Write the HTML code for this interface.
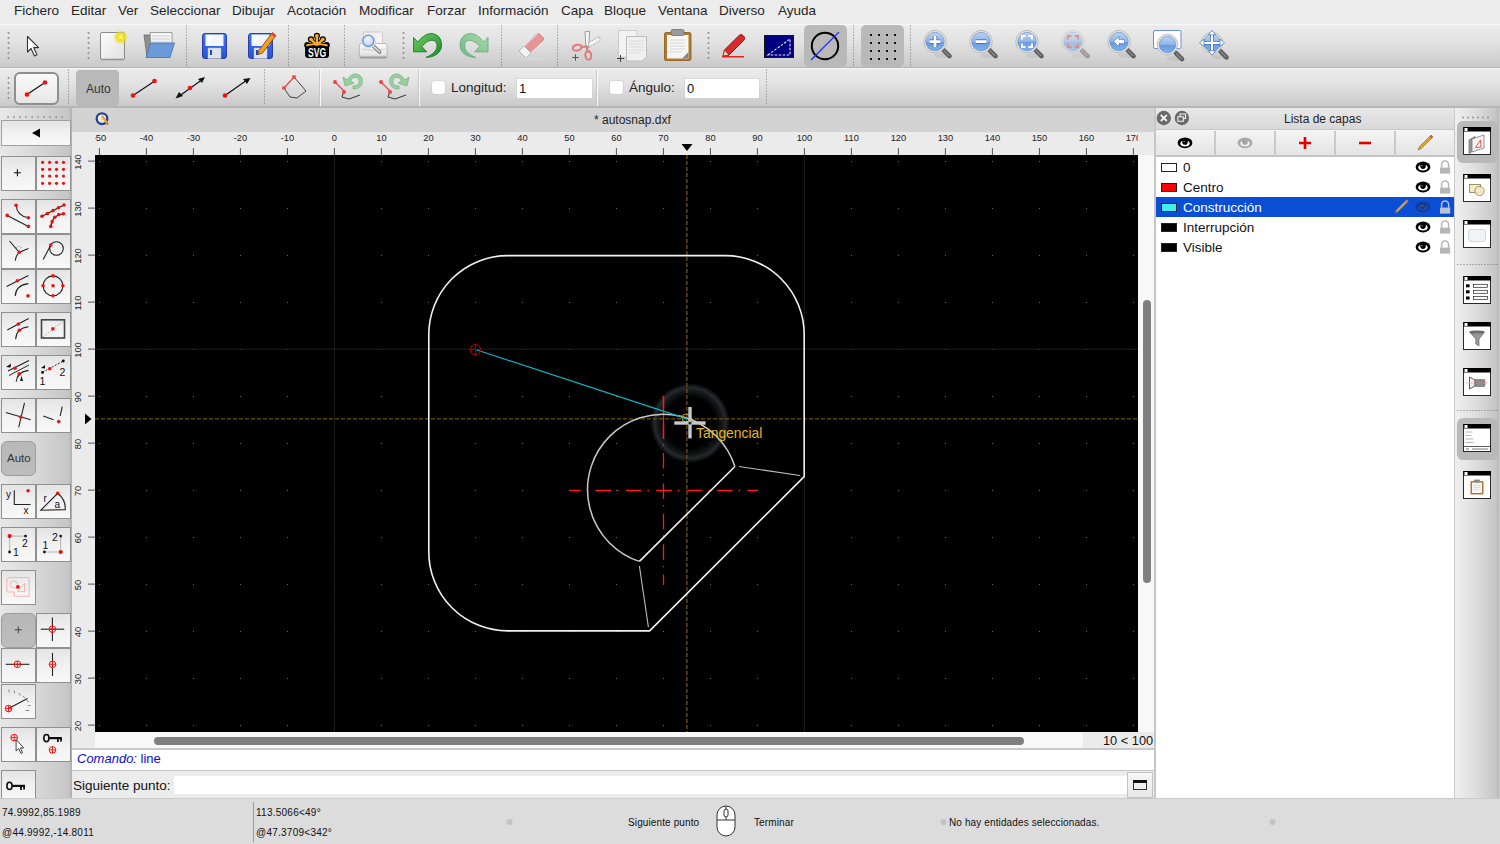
<!DOCTYPE html><html><head><meta charset="utf-8"><style>
*{margin:0;padding:0;box-sizing:border-box}
html,body{width:1500px;height:844px;overflow:hidden;background:#ececec;font-family:"Liberation Sans",sans-serif;color:#222}
body{position:relative}
.a{position:absolute}
.t{position:absolute;white-space:nowrap;line-height:1}
svg{position:absolute;overflow:visible}
#menu span{position:absolute;top:4px;font-size:13.5px;color:#262626;line-height:1}
.tb{position:absolute;left:0;width:1500px;background:linear-gradient(#ececec,#e2e2e2 40%,#cacaca);border-top:1px solid #f7f7f7;border-bottom:1px solid #b3b3b3}
.lb{position:absolute;width:35px;height:34px;border:1px solid #909090;background:linear-gradient(#e4e4e4,#f0f0f0 45%,#f8f8f8)}
.act{position:absolute;background:#b9b9b9;border-radius:5px}
</style></head><body>
<div id="menu" class="a" style="left:0;top:0;width:1500px;height:24px;background:#ececec">
<span style="left:14px">Fichero</span>
<span style="left:71px">Editar</span>
<span style="left:118px">Ver</span>
<span style="left:150px">Seleccionar</span>
<span style="left:232px">Dibujar</span>
<span style="left:287px">Acotación</span>
<span style="left:359px">Modificar</span>
<span style="left:427px">Forzar</span>
<span style="left:478px">Información</span>
<span style="left:561px">Capa</span>
<span style="left:604px">Bloque</span>
<span style="left:658px">Ventana</span>
<span style="left:719px">Diverso</span>
<span style="left:778px">Ayuda</span>
</div>
<div class="tb" style="top:24px;height:44px"></div>
<div class="tb" style="top:68px;height:40px;border-bottom:2px solid #b6b6b6"></div>
<svg style="left:0;top:0" width="1500" height="844"><circle cx="8.5" cy="33" r="1.0" fill="#8c8c8c"/><circle cx="8.5" cy="38" r="1.0" fill="#8c8c8c"/><circle cx="8.5" cy="43" r="1.0" fill="#8c8c8c"/><circle cx="8.5" cy="48" r="1.0" fill="#8c8c8c"/><circle cx="8.5" cy="53" r="1.0" fill="#8c8c8c"/><circle cx="8.5" cy="58" r="1.0" fill="#8c8c8c"/><circle cx="88.5" cy="33" r="1.0" fill="#8c8c8c"/><circle cx="88.5" cy="38" r="1.0" fill="#8c8c8c"/><circle cx="88.5" cy="43" r="1.0" fill="#8c8c8c"/><circle cx="88.5" cy="48" r="1.0" fill="#8c8c8c"/><circle cx="88.5" cy="53" r="1.0" fill="#8c8c8c"/><circle cx="88.5" cy="58" r="1.0" fill="#8c8c8c"/><circle cx="403.5" cy="33" r="1.0" fill="#8c8c8c"/><circle cx="403.5" cy="38" r="1.0" fill="#8c8c8c"/><circle cx="403.5" cy="43" r="1.0" fill="#8c8c8c"/><circle cx="403.5" cy="48" r="1.0" fill="#8c8c8c"/><circle cx="403.5" cy="53" r="1.0" fill="#8c8c8c"/><circle cx="403.5" cy="58" r="1.0" fill="#8c8c8c"/><circle cx="708.5" cy="33" r="1.0" fill="#8c8c8c"/><circle cx="708.5" cy="38" r="1.0" fill="#8c8c8c"/><circle cx="708.5" cy="43" r="1.0" fill="#8c8c8c"/><circle cx="708.5" cy="48" r="1.0" fill="#8c8c8c"/><circle cx="708.5" cy="53" r="1.0" fill="#8c8c8c"/><circle cx="708.5" cy="58" r="1.0" fill="#8c8c8c"/><circle cx="8.5" cy="78" r="1.0" fill="#8c8c8c"/><circle cx="8.5" cy="83" r="1.0" fill="#8c8c8c"/><circle cx="8.5" cy="88" r="1.0" fill="#8c8c8c"/><circle cx="8.5" cy="93" r="1.0" fill="#8c8c8c"/><circle cx="8.5" cy="98" r="1.0" fill="#8c8c8c"/><circle cx="186.5" cy="26" r="0.55" fill="#6a6a6a"/><circle cx="186.5" cy="29" r="0.55" fill="#6a6a6a"/><circle cx="186.5" cy="32" r="0.55" fill="#6a6a6a"/><circle cx="186.5" cy="35" r="0.55" fill="#6a6a6a"/><circle cx="186.5" cy="38" r="0.55" fill="#6a6a6a"/><circle cx="186.5" cy="41" r="0.55" fill="#6a6a6a"/><circle cx="186.5" cy="44" r="0.55" fill="#6a6a6a"/><circle cx="186.5" cy="47" r="0.55" fill="#6a6a6a"/><circle cx="186.5" cy="50" r="0.55" fill="#6a6a6a"/><circle cx="186.5" cy="53" r="0.55" fill="#6a6a6a"/><circle cx="186.5" cy="56" r="0.55" fill="#6a6a6a"/><circle cx="186.5" cy="59" r="0.55" fill="#6a6a6a"/><circle cx="186.5" cy="62" r="0.55" fill="#6a6a6a"/><circle cx="186.5" cy="65" r="0.55" fill="#6a6a6a"/><circle cx="288.5" cy="26" r="0.55" fill="#6a6a6a"/><circle cx="288.5" cy="29" r="0.55" fill="#6a6a6a"/><circle cx="288.5" cy="32" r="0.55" fill="#6a6a6a"/><circle cx="288.5" cy="35" r="0.55" fill="#6a6a6a"/><circle cx="288.5" cy="38" r="0.55" fill="#6a6a6a"/><circle cx="288.5" cy="41" r="0.55" fill="#6a6a6a"/><circle cx="288.5" cy="44" r="0.55" fill="#6a6a6a"/><circle cx="288.5" cy="47" r="0.55" fill="#6a6a6a"/><circle cx="288.5" cy="50" r="0.55" fill="#6a6a6a"/><circle cx="288.5" cy="53" r="0.55" fill="#6a6a6a"/><circle cx="288.5" cy="56" r="0.55" fill="#6a6a6a"/><circle cx="288.5" cy="59" r="0.55" fill="#6a6a6a"/><circle cx="288.5" cy="62" r="0.55" fill="#6a6a6a"/><circle cx="288.5" cy="65" r="0.55" fill="#6a6a6a"/><circle cx="344.5" cy="26" r="0.55" fill="#6a6a6a"/><circle cx="344.5" cy="29" r="0.55" fill="#6a6a6a"/><circle cx="344.5" cy="32" r="0.55" fill="#6a6a6a"/><circle cx="344.5" cy="35" r="0.55" fill="#6a6a6a"/><circle cx="344.5" cy="38" r="0.55" fill="#6a6a6a"/><circle cx="344.5" cy="41" r="0.55" fill="#6a6a6a"/><circle cx="344.5" cy="44" r="0.55" fill="#6a6a6a"/><circle cx="344.5" cy="47" r="0.55" fill="#6a6a6a"/><circle cx="344.5" cy="50" r="0.55" fill="#6a6a6a"/><circle cx="344.5" cy="53" r="0.55" fill="#6a6a6a"/><circle cx="344.5" cy="56" r="0.55" fill="#6a6a6a"/><circle cx="344.5" cy="59" r="0.55" fill="#6a6a6a"/><circle cx="344.5" cy="62" r="0.55" fill="#6a6a6a"/><circle cx="344.5" cy="65" r="0.55" fill="#6a6a6a"/><circle cx="501.5" cy="26" r="0.55" fill="#6a6a6a"/><circle cx="501.5" cy="29" r="0.55" fill="#6a6a6a"/><circle cx="501.5" cy="32" r="0.55" fill="#6a6a6a"/><circle cx="501.5" cy="35" r="0.55" fill="#6a6a6a"/><circle cx="501.5" cy="38" r="0.55" fill="#6a6a6a"/><circle cx="501.5" cy="41" r="0.55" fill="#6a6a6a"/><circle cx="501.5" cy="44" r="0.55" fill="#6a6a6a"/><circle cx="501.5" cy="47" r="0.55" fill="#6a6a6a"/><circle cx="501.5" cy="50" r="0.55" fill="#6a6a6a"/><circle cx="501.5" cy="53" r="0.55" fill="#6a6a6a"/><circle cx="501.5" cy="56" r="0.55" fill="#6a6a6a"/><circle cx="501.5" cy="59" r="0.55" fill="#6a6a6a"/><circle cx="501.5" cy="62" r="0.55" fill="#6a6a6a"/><circle cx="501.5" cy="65" r="0.55" fill="#6a6a6a"/><circle cx="557.5" cy="26" r="0.55" fill="#6a6a6a"/><circle cx="557.5" cy="29" r="0.55" fill="#6a6a6a"/><circle cx="557.5" cy="32" r="0.55" fill="#6a6a6a"/><circle cx="557.5" cy="35" r="0.55" fill="#6a6a6a"/><circle cx="557.5" cy="38" r="0.55" fill="#6a6a6a"/><circle cx="557.5" cy="41" r="0.55" fill="#6a6a6a"/><circle cx="557.5" cy="44" r="0.55" fill="#6a6a6a"/><circle cx="557.5" cy="47" r="0.55" fill="#6a6a6a"/><circle cx="557.5" cy="50" r="0.55" fill="#6a6a6a"/><circle cx="557.5" cy="53" r="0.55" fill="#6a6a6a"/><circle cx="557.5" cy="56" r="0.55" fill="#6a6a6a"/><circle cx="557.5" cy="59" r="0.55" fill="#6a6a6a"/><circle cx="557.5" cy="62" r="0.55" fill="#6a6a6a"/><circle cx="557.5" cy="65" r="0.55" fill="#6a6a6a"/><circle cx="853.5" cy="26" r="0.55" fill="#6a6a6a"/><circle cx="853.5" cy="29" r="0.55" fill="#6a6a6a"/><circle cx="853.5" cy="32" r="0.55" fill="#6a6a6a"/><circle cx="853.5" cy="35" r="0.55" fill="#6a6a6a"/><circle cx="853.5" cy="38" r="0.55" fill="#6a6a6a"/><circle cx="853.5" cy="41" r="0.55" fill="#6a6a6a"/><circle cx="853.5" cy="44" r="0.55" fill="#6a6a6a"/><circle cx="853.5" cy="47" r="0.55" fill="#6a6a6a"/><circle cx="853.5" cy="50" r="0.55" fill="#6a6a6a"/><circle cx="853.5" cy="53" r="0.55" fill="#6a6a6a"/><circle cx="853.5" cy="56" r="0.55" fill="#6a6a6a"/><circle cx="853.5" cy="59" r="0.55" fill="#6a6a6a"/><circle cx="853.5" cy="62" r="0.55" fill="#6a6a6a"/><circle cx="853.5" cy="65" r="0.55" fill="#6a6a6a"/><circle cx="910.5" cy="26" r="0.55" fill="#6a6a6a"/><circle cx="910.5" cy="29" r="0.55" fill="#6a6a6a"/><circle cx="910.5" cy="32" r="0.55" fill="#6a6a6a"/><circle cx="910.5" cy="35" r="0.55" fill="#6a6a6a"/><circle cx="910.5" cy="38" r="0.55" fill="#6a6a6a"/><circle cx="910.5" cy="41" r="0.55" fill="#6a6a6a"/><circle cx="910.5" cy="44" r="0.55" fill="#6a6a6a"/><circle cx="910.5" cy="47" r="0.55" fill="#6a6a6a"/><circle cx="910.5" cy="50" r="0.55" fill="#6a6a6a"/><circle cx="910.5" cy="53" r="0.55" fill="#6a6a6a"/><circle cx="910.5" cy="56" r="0.55" fill="#6a6a6a"/><circle cx="910.5" cy="59" r="0.55" fill="#6a6a6a"/><circle cx="910.5" cy="62" r="0.55" fill="#6a6a6a"/><circle cx="910.5" cy="65" r="0.55" fill="#6a6a6a"/><circle cx="68.5" cy="70" r="0.55" fill="#6a6a6a"/><circle cx="68.5" cy="73" r="0.55" fill="#6a6a6a"/><circle cx="68.5" cy="76" r="0.55" fill="#6a6a6a"/><circle cx="68.5" cy="79" r="0.55" fill="#6a6a6a"/><circle cx="68.5" cy="82" r="0.55" fill="#6a6a6a"/><circle cx="68.5" cy="85" r="0.55" fill="#6a6a6a"/><circle cx="68.5" cy="88" r="0.55" fill="#6a6a6a"/><circle cx="68.5" cy="91" r="0.55" fill="#6a6a6a"/><circle cx="68.5" cy="94" r="0.55" fill="#6a6a6a"/><circle cx="68.5" cy="97" r="0.55" fill="#6a6a6a"/><circle cx="68.5" cy="100" r="0.55" fill="#6a6a6a"/><circle cx="68.5" cy="103" r="0.55" fill="#6a6a6a"/><circle cx="264.5" cy="70" r="0.55" fill="#6a6a6a"/><circle cx="264.5" cy="73" r="0.55" fill="#6a6a6a"/><circle cx="264.5" cy="76" r="0.55" fill="#6a6a6a"/><circle cx="264.5" cy="79" r="0.55" fill="#6a6a6a"/><circle cx="264.5" cy="82" r="0.55" fill="#6a6a6a"/><circle cx="264.5" cy="85" r="0.55" fill="#6a6a6a"/><circle cx="264.5" cy="88" r="0.55" fill="#6a6a6a"/><circle cx="264.5" cy="91" r="0.55" fill="#6a6a6a"/><circle cx="264.5" cy="94" r="0.55" fill="#6a6a6a"/><circle cx="264.5" cy="97" r="0.55" fill="#6a6a6a"/><circle cx="264.5" cy="100" r="0.55" fill="#6a6a6a"/><circle cx="264.5" cy="103" r="0.55" fill="#6a6a6a"/><circle cx="766.5" cy="70" r="0.55" fill="#6a6a6a"/><circle cx="766.5" cy="73" r="0.55" fill="#6a6a6a"/><circle cx="766.5" cy="76" r="0.55" fill="#6a6a6a"/><circle cx="766.5" cy="79" r="0.55" fill="#6a6a6a"/><circle cx="766.5" cy="82" r="0.55" fill="#6a6a6a"/><circle cx="766.5" cy="85" r="0.55" fill="#6a6a6a"/><circle cx="766.5" cy="88" r="0.55" fill="#6a6a6a"/><circle cx="766.5" cy="91" r="0.55" fill="#6a6a6a"/><circle cx="766.5" cy="94" r="0.55" fill="#6a6a6a"/><circle cx="766.5" cy="97" r="0.55" fill="#6a6a6a"/><circle cx="766.5" cy="100" r="0.55" fill="#6a6a6a"/><circle cx="766.5" cy="103" r="0.55" fill="#6a6a6a"/><rect x="320" y="70" width="1" height="36" fill="#fafafa"/><rect x="319" y="70" width="1" height="36" fill="#c6c6c6"/><rect x="419" y="70" width="1" height="36" fill="#fafafa"/><rect x="418" y="70" width="1" height="36" fill="#c6c6c6"/><rect x="597" y="70" width="1" height="36" fill="#fafafa"/><rect x="596" y="70" width="1" height="36" fill="#c6c6c6"/></svg>
<div class="act" style="left:804px;top:25px;width:43px;height:42px"></div>
<div class="act" style="left:861px;top:25px;width:43px;height:42px"></div>
<div class="act" style="left:76px;top:70px;width:43px;height:36px;border-radius:4px"></div>
<div class="t" style="left:86px;top:83px;font-size:12px;color:#333">Auto</div>
<div class="a" style="left:14px;top:72px;width:45px;height:33px;border:2px solid #8e8e8e;border-radius:6px;background:linear-gradient(#fafafa,#e6e6e6)"></div>
<div class="a" style="left:432px;top:81px;width:13px;height:13px;background:#fff;border-radius:3px;box-shadow:0 0 0 0.5px #c8c8c8"></div>
<div class="t" style="left:451px;top:81px;font-size:13.5px;color:#222">Longitud:</div>
<div class="a" style="left:517px;top:79px;width:75px;height:19px;background:#fff;box-shadow:0 0 0 0.5px #cfcfcf"></div>
<div class="t" style="left:519px;top:82px;font-size:13px;color:#111">1</div>
<div class="a" style="left:610px;top:81px;width:13px;height:13px;background:#fff;border-radius:3px;box-shadow:0 0 0 0.5px #c8c8c8"></div>
<div class="t" style="left:629px;top:81px;font-size:13.5px;color:#222">Ángulo:</div>
<div class="a" style="left:685px;top:79px;width:74px;height:19px;background:#fff;box-shadow:0 0 0 0.5px #cfcfcf"></div>
<div class="t" style="left:687px;top:82px;font-size:13px;color:#111">0</div>
<svg style="left:0;top:0" width="1500" height="110" font-family="Liberation Sans"><defs>
<linearGradient id="gPage" x1="0" y1="0" x2="1" y2="1"><stop offset="0" stop-color="#fdfdfd"/><stop offset="1" stop-color="#e0e0e0"/></linearGradient>
<radialGradient id="gYel"><stop offset="0" stop-color="#ffffc8"/><stop offset="0.3" stop-color="#f4e81c"/><stop offset="0.6" stop-color="#ecdc20" stop-opacity="0.8"/><stop offset="1" stop-color="#f0e020" stop-opacity="0"/></radialGradient>
<linearGradient id="gBlue" x1="0" y1="0" x2="0" y2="1"><stop offset="0" stop-color="#3f78f0"/><stop offset="1" stop-color="#2453d8"/></linearGradient>
<radialGradient id="gLens" cx="0.45" cy="0.4" r="0.6"><stop offset="0" stop-color="#d8e8fa"/><stop offset="0.5" stop-color="#8ab4ea"/><stop offset="1" stop-color="#4a7fd0"/></radialGradient>
<linearGradient id="gGreen" x1="0" y1="0" x2="1" y2="1"><stop offset="0" stop-color="#6ccc5c"/><stop offset="1" stop-color="#1e8a2e"/></linearGradient>
<linearGradient id="gGreenL" x1="0" y1="0" x2="1" y2="1"><stop offset="0" stop-color="#a8dca8"/><stop offset="1" stop-color="#6cb884"/></linearGradient>
</defs><path d="M27.5 36.5 L27.5 52 L31 48.5 L34.5 56 L37 54.8 L33.6 47.6 L38.6 47.6 Z" fill="#fff" stroke="#333" stroke-width="1.1" stroke-linejoin="round"/><rect x="100.5" y="32.5" width="24" height="27" rx="1.5" fill="url(#gPage)" stroke="#8a8a8a" stroke-width="1"/><rect x="101" y="58.5" width="23" height="2" fill="#9a9a9a" opacity="0.6"/><circle cx="120.7" cy="37.3" r="7.5" fill="url(#gYel)"/><path d="M144 35 L152 35 L154 37 L165 37 L165 56 L147 57 Z" fill="#8e8e8e" stroke="#6a6a6a" stroke-width="0.8"/><path d="M150 32.5 L172 32.5 L172 47 L151 47 Z" fill="#f4f4f4" stroke="#8a8a8a" stroke-width="0.8"/><path d="M152 36h18M152 39h18M152 42h18" stroke="#c8c8c8" stroke-width="0.8"/><path d="M150.5 43 L174.5 43 L170 57.5 L146 57.5 Z" fill="#6b9ad8" stroke="#4a78b8" stroke-width="0.9"/><rect x="202.5" y="33.5" width="24" height="25" rx="2.5" fill="url(#gBlue)" stroke="#2a3ea0" stroke-width="1"/><rect x="205.5" y="34.5" width="18" height="11.5" fill="#f2f6fc"/><path d="M207 35.5 L214 35.5 L208 44 Z" fill="#fff" opacity="0.8"/><rect x="208" y="48" width="13" height="10.5" fill="#dfe3ea" stroke="#b8bcc8" stroke-width="0.5"/><rect x="210" y="50" width="2" height="5" fill="#1a46c8"/><rect x="248.5" y="33.5" width="24" height="25" rx="2.5" fill="url(#gBlue)" stroke="#2a3ea0" stroke-width="1"/><rect x="251.5" y="34.5" width="18" height="11.5" fill="#f2f6fc"/><path d="M253 35.5 L260 35.5 L254 44 Z" fill="#fff" opacity="0.8"/><rect x="254" y="48" width="13" height="10.5" fill="#dfe3ea" stroke="#b8bcc8" stroke-width="0.5"/><rect x="256" y="50" width="2" height="5" fill="#1a46c8"/><path d="M259 50 L272.5 32.5 L276 35.5 L262.5 53 L258 54.5 Z" fill="#f0a020" stroke="#8a4a10" stroke-width="0.9" stroke-linejoin="round"/><path d="M271 34.5 L272.5 32.5 L276 35.5 L274.5 37.5Z" fill="#e04848"/><rect x="305.1" y="42.9" width="23.9" height="15" rx="3" fill="#000"/><circle cx="307.3" cy="45.2" r="3.1" fill="#000"/><circle cx="311" cy="39.3" r="3.1" fill="#000"/><circle cx="316.9" cy="35.8" r="3.1" fill="#000"/><circle cx="322.8" cy="39.3" r="3.1" fill="#000"/><circle cx="326.7" cy="45.2" r="3.1" fill="#000"/><path d="M316.9 45.3 L311 39.3M316.9 45.3 L316.9 35.8M316.9 45.3 L322.8 39.3" stroke="#000" stroke-width="4"/><circle cx="311" cy="39.3" r="1.9" fill="#f7a928"/><circle cx="316.9" cy="35.8" r="1.9" fill="#f7a928"/><circle cx="322.8" cy="39.3" r="1.9" fill="#f7a928"/><path d="M316.9 45.3 L311 39.3M316.9 45.3 L316.9 35.8M316.9 45.3 L322.8 39.3" stroke="#f7a928" stroke-width="2.4"/><path d="M307 45.3 Q317 43 326.9 45.3" stroke="#f7a928" stroke-width="1.9" fill="none" stroke-linecap="round"/><text transform="translate(317,57.2) scale(0.64,1)" text-anchor="middle" font-size="13.5" font-weight="bold" fill="#fff">SVG</text><defs><linearGradient id="gPrn" x1="0" y1="0" x2="0" y2="1"><stop offset="0" stop-color="#fafafa"/><stop offset="0.7" stop-color="#e8e8e8"/><stop offset="1" stop-color="#c8c8c8"/></linearGradient><radialGradient id="gLensL" cx="0.45" cy="0.35" r="0.7"><stop offset="0" stop-color="#f0f6fc"/><stop offset="1" stop-color="#b4cae6"/></radialGradient></defs><rect x="363.5" y="32" width="19" height="13.5" rx="1" fill="#f2f2f2" stroke="#c4c4c4" stroke-width="0.8"/><path d="M385 43.5 Q387.2 43.5 387.2 46 L387.2 55.5 Q387.2 58 384.5 58 L362 58 Q359.3 58 359.3 55.5 L359.3 46 Q359.3 43.5 361.5 43.5 Z" fill="url(#gPrn)" stroke="#a8a8a8" stroke-width="0.8"/><path d="M361.5 49 Q374 52 385 49" fill="none" stroke="#c8c8c8" stroke-width="0.8"/><rect x="360" y="56.5" width="26.5" height="1.8" fill="#8a8a8a" opacity="0.7"/><path d="M372.5 45 L379.5 52" stroke="#7a7a7a" stroke-width="3.6" stroke-linecap="round"/><path d="M372.8 45.3 L379.2 51.7" stroke="#d8d8d8" stroke-width="1.8" stroke-linecap="round"/><circle cx="368.3" cy="40.9" r="7" fill="#fbfbfb" stroke="#c8c8c8" stroke-width="0.6"/><circle cx="368.3" cy="40.9" r="5.6" fill="url(#gLensL)" stroke="#4a86d0" stroke-width="1.1"/><path d="M413.6 37.4 L417.7 42.1 C421 38 426 33.6 431 33.6 C438 33.6 442 39 441.5 46 C441 53 434 57.5 426.2 57.3 C432 55 437 51 437 46 C437 42 434.5 40.3 432 40.3 C428 40.3 424.5 43.5 421.8 46.5 L426.8 51.8 L413.6 51.8 Z" fill="url(#gGreen)" stroke="#1a7a2a" stroke-width="0.9" stroke-linejoin="round"/><path d="M413.6 37.4 L417.7 42.1 C421 38 426 33.6 431 33.6 C438 33.6 442 39 441.5 46 C441 53 434 57.5 426.2 57.3 C432 55 437 51 437 46 C437 42 434.5 40.3 432 40.3 C428 40.3 424.5 43.5 421.8 46.5 L426.8 51.8 L413.6 51.8 Z" fill="url(#gGreenL)" stroke="#6aa880" stroke-width="0.9" stroke-linejoin="round" transform="translate(901.6,0) scale(-1,1)"/><path d="M519 51 L536 34 Q538 32.5 540 34.5 L543 37.5 Q544.5 39.5 543 41 L526 58 Z" fill="#e8868a" stroke="#c05a60" stroke-width="0.8" opacity="0.85"/><path d="M519 51 L524 46 L531 53 L526 58 Z" fill="#f4f4f4" stroke="#b0b0b0" stroke-width="0.8"/><path d="M524 46 L538 33 M531 53 L545 40" stroke="#f6f6f6" stroke-width="1.2" opacity="0.7"/><ellipse cx="533" cy="58.5" rx="11" ry="1.3" fill="#d8d8d8"/><path d="M585 31.8 L589.6 31.2 L588.8 47.5 L585.8 45.5 Z" fill="#f4f4f4" stroke="#8a8a8a" stroke-width="0.8" stroke-linejoin="round"/><path d="M588.6 42.5 L599.4 36.6 L600.2 40.4 L588.8 47.5 Z" fill="#f4f4f4" stroke="#8a8a8a" stroke-width="0.8" stroke-dasharray="1.2 0.8" stroke-linejoin="round"/><path d="M581.2 47 L586.5 46.3 M586.8 47 L587.6 51.5" stroke="#e07c80" stroke-width="2.2" stroke-linecap="round"/><ellipse cx="577.1" cy="47.7" rx="4.4" ry="2.9" fill="none" stroke="#e07c80" stroke-width="2.1" transform="rotate(-12 577.1 47.7)"/><ellipse cx="588.3" cy="55.4" rx="2.9" ry="4.3" fill="none" stroke="#e07c80" stroke-width="2.1" transform="rotate(-6 588.3 55.4)"/><path d="M572.3 57.5h6.4M575.5 54.3v6.4" stroke="#555" stroke-width="1"/><path d="M618.5 30.5 L637 30.5 L637 57 L618.5 57 Z" fill="#f2f2f2" stroke="#c4c4c4" stroke-width="0.8"/><path d="M626.5 36.5 L646.5 36.5 L646.5 57 L642 61 L626.5 61 Z" fill="#f0f0f0" stroke="#b8b8b8" stroke-width="0.9"/><path d="M629 41h15M629 44h15M629 47h15M629 50h15M629 53h12" stroke="#d4d4d4" stroke-width="0.8"/><path d="M617 58.5h7M620.5 55v7" stroke="#444" stroke-width="1"/><rect x="664.5" y="32.5" width="26.5" height="28" rx="1.5" fill="#b47a2c" stroke="#8a5a1a" stroke-width="0.8"/><path d="M667 35 L688.5 35 L688.5 58.5 L667 58.5Z" fill="#f6f6f6"/><path d="M682 58.5 L688.5 52 L688.5 58.5Z" fill="#888"/><path d="M670 40h15M670 43h15M670 46h15M670 49h15M670 52h12" stroke="#cfcfcf" stroke-width="0.8"/><rect x="671" y="29.5" width="13" height="6" rx="1.5" fill="#9a9a9a" stroke="#707070" stroke-width="0.8"/><path d="M723 56 L724.5 50 L739 35.5 Q741 33.5 743 35.5 L744 36.5 Q745.5 38.5 743.5 40.5 L729 55 Z" fill="#d92b2b" stroke="#7a1010" stroke-width="0.9" stroke-linejoin="round"/><path d="M723 56 L724.5 50 L729 55Z" fill="#f4d4a0" stroke="#7a1010" stroke-width="0.6"/><rect x="722" y="56" width="22" height="1.5" fill="#e82020"/><rect x="764.5" y="35.5" width="29" height="22" fill="#000080" stroke="#181818" stroke-width="1"/><path d="M768 55 L790 39 L790 55 Z" fill="none" stroke="#e8e8f8" stroke-width="1.1" stroke-dasharray="2.5 1.5"/><circle cx="825" cy="46" r="13.2" fill="none" stroke="#000" stroke-width="2"/><line x1="811" y1="60" x2="839" y2="32" stroke="#1a2ef0" stroke-width="1.1"/><rect x="870" y="34" width="2" height="2" fill="#111"/><rect x="870" y="42" width="2" height="2" fill="#111"/><rect x="870" y="50" width="2" height="2" fill="#111"/><rect x="870" y="58" width="2" height="2" fill="#111"/><rect x="878" y="34" width="2" height="2" fill="#111"/><rect x="878" y="42" width="2" height="2" fill="#111"/><rect x="878" y="50" width="2" height="2" fill="#111"/><rect x="878" y="58" width="2" height="2" fill="#111"/><rect x="886" y="34" width="2" height="2" fill="#111"/><rect x="886" y="42" width="2" height="2" fill="#111"/><rect x="886" y="50" width="2" height="2" fill="#111"/><rect x="886" y="58" width="2" height="2" fill="#111"/><rect x="894" y="34" width="2" height="2" fill="#111"/><rect x="894" y="42" width="2" height="2" fill="#111"/><rect x="894" y="50" width="2" height="2" fill="#111"/><rect x="894" y="58" width="2" height="2" fill="#111"/><defs><linearGradient id="gLens2" x1="0" y1="0" x2="0" y2="1"><stop offset="0" stop-color="#bcd2f0"/><stop offset="0.5" stop-color="#8fb4e6"/><stop offset="0.52" stop-color="#6a9ade"/><stop offset="1" stop-color="#7cb2ee"/></linearGradient></defs><g><ellipse cx="943" cy="55.6" rx="9" ry="2.5" fill="#000" opacity="0.06"/><path d="M943.5 50.1 L949.5 56.1" stroke="#5e5e5e" stroke-width="4.6" stroke-linecap="round"/><path d="M944 50.6 L949 55.6" stroke="#8a8a8a" stroke-width="1.4" stroke-linecap="round" stroke-dasharray="1 1"/><circle cx="935" cy="41.6" r="11.2" fill="#ecebe4" stroke="#b4b2aa" stroke-width="0.9"/><circle cx="935" cy="41.6" r="9.299999999999999" fill="url(#gLens2)" stroke="#5a86c8" stroke-width="0.6"/><path d="M929.5 41.6h11M935 36.1v11" stroke="#3a6ab8" stroke-width="4.4"/><path d="M929.5 41.6h11M935 36.1v11" stroke="#fff" stroke-width="2.8"/></g><g><ellipse cx="989" cy="55.6" rx="9" ry="2.5" fill="#000" opacity="0.06"/><path d="M989.5 50.1 L995.5 56.1" stroke="#5e5e5e" stroke-width="4.6" stroke-linecap="round"/><path d="M990 50.6 L995 55.6" stroke="#8a8a8a" stroke-width="1.4" stroke-linecap="round" stroke-dasharray="1 1"/><circle cx="981" cy="41.6" r="11.2" fill="#ecebe4" stroke="#b4b2aa" stroke-width="0.9"/><circle cx="981" cy="41.6" r="9.299999999999999" fill="url(#gLens2)" stroke="#5a86c8" stroke-width="0.6"/><path d="M975.5 41.6h11" stroke="#3a6ab8" stroke-width="4.4"/><path d="M975.5 41.6h11" stroke="#fff" stroke-width="2.8"/></g><g><ellipse cx="1035" cy="55.6" rx="9" ry="2.5" fill="#000" opacity="0.06"/><path d="M1035.5 50.1 L1041.5 56.1" stroke="#5e5e5e" stroke-width="4.6" stroke-linecap="round"/><path d="M1036 50.6 L1041 55.6" stroke="#8a8a8a" stroke-width="1.4" stroke-linecap="round" stroke-dasharray="1 1"/><circle cx="1027" cy="41.6" r="11.2" fill="#ecebe4" stroke="#b4b2aa" stroke-width="0.9"/><circle cx="1027" cy="41.6" r="9.299999999999999" fill="url(#gLens2)" stroke="#5a86c8" stroke-width="0.6"/><path d="M1022 39.6v-3.5h3.5M1028.5 36.1h3.5v3.5M1032 43.6v3.5h-3.5M1025.5 47.1h-3.5v-3.5" fill="none" stroke="#fff" stroke-width="2"/></g><g opacity="0.5"><ellipse cx="1081" cy="55.6" rx="9" ry="2.5" fill="#000" opacity="0.06"/><path d="M1081.5 50.1 L1087.5 56.1" stroke="#5e5e5e" stroke-width="4.6" stroke-linecap="round"/><path d="M1082 50.6 L1087 55.6" stroke="#8a8a8a" stroke-width="1.4" stroke-linecap="round" stroke-dasharray="1 1"/><circle cx="1073" cy="41.6" r="11.2" fill="#ecebe4" stroke="#b4b2aa" stroke-width="0.9"/><circle cx="1073" cy="41.6" r="9.299999999999999" fill="url(#gLens2)" stroke="#5a86c8" stroke-width="0.6"/><path d="M1068 39.6v-3.5h3.5M1074.5 36.1h3.5v3.5M1078 43.6v3.5h-3.5M1071.5 47.1h-3.5v-3.5" fill="none" stroke="#e04040" stroke-width="2"/></g><g><ellipse cx="1127" cy="55.6" rx="9" ry="2.5" fill="#000" opacity="0.06"/><path d="M1127.5 50.1 L1133.5 56.1" stroke="#5e5e5e" stroke-width="4.6" stroke-linecap="round"/><path d="M1128 50.6 L1133 55.6" stroke="#8a8a8a" stroke-width="1.4" stroke-linecap="round" stroke-dasharray="1 1"/><circle cx="1119" cy="41.6" r="11.2" fill="#ecebe4" stroke="#b4b2aa" stroke-width="0.9"/><circle cx="1119" cy="41.6" r="9.299999999999999" fill="url(#gLens2)" stroke="#5a86c8" stroke-width="0.6"/><path d="M1113.5 41.6 L1119 36.5 L1119 39.6 L1124.5 39.6 L1124.5 43.6 L1119 43.6 L1119 46.7Z" fill="#fff" stroke="#3a6ab8" stroke-width="0.6"/></g><rect x="1153.5" y="30.5" width="27.5" height="18" rx="1.5" fill="#fff" stroke="#6a90d0" stroke-width="1"/><g><ellipse cx="1175.5" cy="58.6" rx="9" ry="2.5" fill="#000" opacity="0.06"/><path d="M1176.0 53.1 L1182.0 59.1" stroke="#5e5e5e" stroke-width="4.6" stroke-linecap="round"/><path d="M1176.5 53.6 L1181.5 58.6" stroke="#8a8a8a" stroke-width="1.4" stroke-linecap="round" stroke-dasharray="1 1"/><circle cx="1167.5" cy="44.6" r="10.2" fill="#ecebe4" stroke="#b4b2aa" stroke-width="0.9"/><circle cx="1167.5" cy="44.6" r="8.299999999999999" fill="url(#gLens2)" stroke="#5a86c8" stroke-width="0.6"/></g><g><ellipse cx="1220" cy="56.8" rx="9" ry="2.5" fill="#000" opacity="0.06"/><path d="M1220.5 51.3 L1226.5 57.3" stroke="#5e5e5e" stroke-width="4.6" stroke-linecap="round"/><path d="M1221 51.8 L1226 56.8" stroke="#8a8a8a" stroke-width="1.4" stroke-linecap="round" stroke-dasharray="1 1"/><circle cx="1212" cy="42.8" r="10.5" fill="#ecebe4" stroke="#b4b2aa" stroke-width="0.9"/><circle cx="1212" cy="42.8" r="8.6" fill="url(#gLens2)" stroke="#5a86c8" stroke-width="0.6"/><path d="M1212 33v19.6M1202.2 42.8h19.6" stroke="#3a6ab8" stroke-width="3.6"/><path d="M1212 33v19.6M1202.2 42.8h19.6" stroke="#fff" stroke-width="2.2"/><path d="M1212 30.3l-3.6 4.5h7.2zM1212 55.3l-3.6-4.5h7.2zM1199.5 42.8l4.5-3.6v7.2zM1224.5 42.8l-4.5-3.6v7.2z" fill="#fff" stroke="#3a6ab8" stroke-width="0.7"/></g><line x1="27" y1="94.5" x2="45" y2="82.5" stroke="#111" stroke-width="1.2"/><circle cx="27" cy="94.5" r="2.3" fill="#f01010"/><circle cx="45" cy="82.5" r="2.3" fill="#f01010"/><line x1="133" y1="95.5" x2="154" y2="81.5" stroke="#111" stroke-width="1.2"/><circle cx="133" cy="95.5" r="2.3" fill="#f01010"/><circle cx="154.5" cy="81" r="2.3" fill="#f01010"/><line x1="178" y1="97" x2="203" y2="79" stroke="#111" stroke-width="1.2"/><path d="M175.5 98.5 L179 92 L183 96Z M205 77 L198 79 L202 83Z" fill="#111"/><circle cx="190" cy="88" r="2.3" fill="#f01010"/><line x1="225" y1="95.5" x2="247" y2="80" stroke="#111" stroke-width="1.2"/><path d="M250.5 78 L243 79 L247 84Z" fill="#111"/><circle cx="225" cy="95.5" r="2.3" fill="#f01010"/><path d="M284 88 L294 77 L306 91 L297 98 L290 97 Z" fill="none" stroke="#444" stroke-width="1"/><line x1="284" y1="88" x2="294" y2="77" stroke="#f05050" stroke-width="1.2"/><circle cx="284" cy="88" r="2.1" fill="#f05050"/><circle cx="294" cy="77" r="2.1" fill="#f05050"/><g transform="translate(335,0)"><path d="M0 82 L9 91 L7 97 L14 99 L25 95" fill="none" stroke="#333" stroke-width="1"/><line x1="0" y1="82" x2="9" y2="91" stroke="#f04040" stroke-width="1.2"/><circle cx="0" cy="82" r="2" fill="#f04040"/><circle cx="9" cy="92" r="2" fill="#f04040"/><path d="M12 80 Q16 73 22 74 Q29 76 27 84 Q25 89 18 89 L18 86 Q23 86 24 83 Q25 78 21 77.5 Q17 77 15.5 81 L19 83 L10 86 L8 77 L11 79Z" fill="#98d0a0" stroke="#70a878" stroke-width="0.6"/></g><g transform="translate(381,0)"><path d="M0 82 L9 91 L7 97 L14 99 L25 95" fill="none" stroke="#333" stroke-width="1"/><line x1="0" y1="82" x2="9" y2="91" stroke="#f04040" stroke-width="1.2"/><circle cx="0" cy="82" r="2" fill="#f04040"/><circle cx="9" cy="92" r="2" fill="#f04040"/><path d="M24 80 Q20 73 14 74 Q7 76 9 84 Q11 89 18 89 L18 86 Q13 86 12 83 Q11 78 15 77.5 Q19 77 20.5 81 L17 83 L26 86 L28 77 L25 79Z" fill="#98d0a0" stroke="#70a878" stroke-width="0.6"/></g></svg>
<div class="a" style="left:0;top:108px;width:71px;height:690px;background:linear-gradient(90deg,#e8e8e8,#d6d6d6 55%,#c6c6c6 96%,#b8b8b8)"></div>
<div class="a" style="left:71px;top:108px;width:1px;height:690px;background:#b0b0b0"></div>
<svg style="left:0;top:0" width="80" height="130"><rect x="7.3" y="116.3" width="1.6" height="1.6" fill="#8e8e8e"/><rect x="13.3" y="116.3" width="1.6" height="1.6" fill="#8e8e8e"/><rect x="19.3" y="116.3" width="1.6" height="1.6" fill="#8e8e8e"/><rect x="25.3" y="116.3" width="1.6" height="1.6" fill="#8e8e8e"/><rect x="31.3" y="116.3" width="1.6" height="1.6" fill="#8e8e8e"/><rect x="37.3" y="116.3" width="1.6" height="1.6" fill="#8e8e8e"/><rect x="43.3" y="116.3" width="1.6" height="1.6" fill="#8e8e8e"/><rect x="49.3" y="116.3" width="1.6" height="1.6" fill="#8e8e8e"/><rect x="55.3" y="116.3" width="1.6" height="1.6" fill="#8e8e8e"/><rect x="61.3" y="116.3" width="1.6" height="1.6" fill="#8e8e8e"/></svg>
<div class="a" style="left:1px;top:120px;width:70px;height:26px;border:1px solid #a0a0a0;background:linear-gradient(#e4e4e4,#f0f0f0 45%,#f8f8f8)"></div>
<svg style="left:0;top:0" width="80" height="150"><path d="M32 133 L40 128.5 L40 137.5Z" fill="#000"/></svg>
<div class="lb" style="left:1px;top:156px;width:35px;height:35px"></div>
<div class="lb" style="left:36px;top:156px;width:35px;height:35px"></div>
<div class="lb" style="left:1px;top:199px;width:35px;height:35px"></div>
<div class="lb" style="left:36px;top:199px;width:35px;height:35px"></div>
<div class="lb" style="left:1px;top:234px;width:35px;height:35px"></div>
<div class="lb" style="left:36px;top:234px;width:35px;height:35px"></div>
<div class="lb" style="left:1px;top:269px;width:35px;height:35px"></div>
<div class="lb" style="left:36px;top:269px;width:35px;height:35px"></div>
<div class="lb" style="left:1px;top:312px;width:35px;height:35px"></div>
<div class="lb" style="left:36px;top:312px;width:35px;height:35px"></div>
<div class="lb" style="left:1px;top:355px;width:35px;height:35px"></div>
<div class="lb" style="left:36px;top:355px;width:35px;height:35px"></div>
<div class="lb" style="left:1px;top:398px;width:35px;height:35px"></div>
<div class="lb" style="left:36px;top:398px;width:35px;height:35px"></div>
<div class="a" style="left:1px;top:441px;width:35px;height:35px;background:linear-gradient(#b8b8b8,#bdbdbd);border:1px solid #9c9c9c;border-radius:6px"></div>
<div class="lb" style="left:1px;top:484px;width:35px;height:35px"></div>
<div class="lb" style="left:36px;top:484px;width:35px;height:35px"></div>
<div class="lb" style="left:1px;top:527px;width:35px;height:35px"></div>
<div class="lb" style="left:36px;top:527px;width:35px;height:35px"></div>
<div class="lb" style="left:1px;top:570px;width:35px;height:35px"></div>
<div class="a" style="left:1px;top:613px;width:35px;height:35px;background:linear-gradient(#b8b8b8,#bdbdbd);border:1px solid #9c9c9c;border-radius:6px"></div>
<div class="lb" style="left:36px;top:613px;width:35px;height:35px"></div>
<div class="lb" style="left:1px;top:648px;width:35px;height:35px"></div>
<div class="lb" style="left:36px;top:648px;width:35px;height:35px"></div>
<div class="lb" style="left:1px;top:684px;width:35px;height:35px"></div>
<div class="lb" style="left:1px;top:727px;width:35px;height:35px"></div>
<div class="lb" style="left:36px;top:727px;width:35px;height:35px"></div>
<div class="lb" style="left:1px;top:770px;width:35px;height:30px"></div>
<div class="t" style="left:7px;top:453px;font-size:11.5px;color:#333">Auto</div>
<svg style="left:0;top:0" width="72" height="800" font-family="Liberation Sans"><path d="M13.9 172.7h7M17.4 169.2v7" stroke="#111" stroke-width="1.1"/><circle cx="42.6" cy="162.3" r="1.6" fill="#f01010"/><circle cx="42.6" cy="169.3" r="1.6" fill="#f01010"/><circle cx="42.6" cy="176.1" r="1.6" fill="#f01010"/><circle cx="42.6" cy="183.3" r="1.6" fill="#f01010"/><circle cx="49.6" cy="162.3" r="1.6" fill="#f01010"/><circle cx="49.6" cy="169.3" r="1.6" fill="#f01010"/><circle cx="49.6" cy="176.1" r="1.6" fill="#f01010"/><circle cx="49.6" cy="183.3" r="1.6" fill="#f01010"/><circle cx="56.5" cy="162.3" r="1.6" fill="#f01010"/><circle cx="56.5" cy="169.3" r="1.6" fill="#f01010"/><circle cx="56.5" cy="176.1" r="1.6" fill="#f01010"/><circle cx="56.5" cy="183.3" r="1.6" fill="#f01010"/><circle cx="63.5" cy="162.3" r="1.6" fill="#f01010"/><circle cx="63.5" cy="169.3" r="1.6" fill="#f01010"/><circle cx="63.5" cy="176.1" r="1.6" fill="#f01010"/><circle cx="63.5" cy="183.3" r="1.6" fill="#f01010"/><line x1="7.2" y1="215.4" x2="28.4" y2="226.4" stroke="#222" stroke-width="1.1" /><circle cx="7.2" cy="215.4" r="1.8" fill="#f01010"/><circle cx="28.4" cy="226.4" r="1.8" fill="#f01010"/><path d="M16.1 205.3 Q17 216 28.4 217.8" fill="none" stroke="#222" stroke-width="1.1"/><circle cx="16.1" cy="205.3" r="1.8" fill="#f01010"/><circle cx="28.4" cy="217.8" r="1.8" fill="#f01010"/><line x1="42" y1="216.3" x2="64" y2="205" stroke="#222" stroke-width="1.1" /><circle cx="42.0" cy="216.3" r="1.8" fill="#f01010"/><circle cx="47.5" cy="213.47" r="1.8" fill="#f01010"/><circle cx="53.0" cy="210.64000000000001" r="1.8" fill="#f01010"/><circle cx="58.5" cy="207.81" r="1.8" fill="#f01010"/><circle cx="64.0" cy="204.98000000000002" r="1.8" fill="#f01010"/><path d="M50.8 226.4 Q52 215 63.5 213.8" fill="none" stroke="#222" stroke-width="1.1"/><circle cx="50.8" cy="226.4" r="1.8" fill="#f01010"/><circle cx="52.2" cy="221.6" r="1.8" fill="#f01010"/><circle cx="54.8" cy="217.3" r="1.8" fill="#f01010"/><circle cx="58.8" cy="214.6" r="1.8" fill="#f01010"/><circle cx="63.5" cy="213.8" r="1.8" fill="#f01010"/><path d="M9.5 241 L19.3 252.3 L28.4 248.5 M19.3 252.3 Q15.5 256 15.2 260.8" fill="none" stroke="#222" stroke-width="1.1"/><path d="M16 248 Q19 245 22 248" fill="none" stroke="#555" stroke-width="0.6" stroke-dasharray="1 1"/><circle cx="19.3" cy="252.3" r="1.8" fill="#f01010"/><circle cx="56.5" cy="248.5" r="6.8" fill="none" stroke="#222" stroke-width="1.1"/><line x1="43.2" y1="259.5" x2="50.8" y2="245.1" stroke="#222" stroke-width="1.1" /><circle cx="50.8" cy="245.1" r="1.8" fill="#f01010"/><line x1="6.6" y1="286.4" x2="28.4" y2="275.4" stroke="#222" stroke-width="1.1" /><circle cx="17.4" cy="280.7" r="1.8" fill="#f01010"/><path d="M15.2 295.9 Q16 285 28.4 283.6" fill="none" stroke="#222" stroke-width="1.1"/><circle cx="28" cy="295.9" r="1.8" fill="#f01010"/><circle cx="53" cy="285.8" r="9.9" fill="none" stroke="#222" stroke-width="1.1"/><circle cx="53" cy="285.8" r="1.8" fill="#f01010"/><circle cx="53" cy="275.9" r="1.8" fill="#f01010"/><circle cx="53" cy="295.7" r="1.8" fill="#f01010"/><circle cx="43.1" cy="285.8" r="1.8" fill="#f01010"/><circle cx="62.9" cy="285.8" r="1.8" fill="#f01010"/><line x1="7.3" y1="329.9" x2="28.6" y2="318.5" stroke="#222" stroke-width="1.1" /><circle cx="18.3" cy="324.1" r="1.8" fill="#f01010"/><path d="M15.6 339.2 Q16.5 328 28.6 326.8" fill="none" stroke="#222" stroke-width="1.1"/><circle cx="19.3" cy="330.3" r="1.8" fill="#f01010"/><rect x="41.5" y="319.8" width="23" height="18.2" fill="none" stroke="#444" stroke-width="1.6"/><line x1="43" y1="337" x2="63" y2="321" stroke="#888" stroke-width="0.7" stroke-dasharray="1.5 1.5"/><circle cx="52.9" cy="328.9" r="1.8" fill="#f01010"/><line x1="8" y1="371" x2="29" y2="360.5" stroke="#222" stroke-width="1.1" /><line x1="9" y1="375.5" x2="29" y2="365" stroke="#222" stroke-width="1" /><circle cx="15" cy="368.2" r="1.8" fill="#f01010"/><path d="M6 367 L11 363.5 L10.5 367.5Z" fill="#111"/><path d="M16.2 381.8 Q17 372 28.6 370.4" fill="none" stroke="#222" stroke-width="1.1"/><circle cx="19.1" cy="373.9" r="1.8" fill="#f01010"/><path d="M20 381 L21.5 376 L23 381Z" fill="#111"/><line x1="42.5" y1="372.4" x2="63.3" y2="361" stroke="#222" stroke-width="1" stroke-dasharray="2 1.5"/><circle cx="42.5" cy="372.4" r="1.4" fill="#111"/><circle cx="63.3" cy="361" r="1.4" fill="#111"/><circle cx="49.8" cy="368.7" r="1.8" fill="#f01010"/><path d="M41 368 L45 365 L45 368.5Z" fill="#111"/><text x="39.5" y="385" font-size="10.5" fill="#111">1</text><text x="59.5" y="376" font-size="10.5" fill="#111">2</text><line x1="5.8" y1="412.5" x2="30.7" y2="419.7" stroke="#222" stroke-width="1.1" /><line x1="24.5" y1="402.9" x2="18.7" y2="427.4" stroke="#222" stroke-width="1.1" /><circle cx="20.7" cy="417" r="1.8" fill="#f01010"/><line x1="43.2" y1="416" x2="53.5" y2="419.7" stroke="#222" stroke-width="1.1" /><line x1="62.2" y1="406.7" x2="60.2" y2="416" stroke="#222" stroke-width="1.1" /><circle cx="58.7" cy="421.6" r="1.8" fill="#f01010"/><text x="6" y="498" font-size="10" fill="#111">y</text><path d="M14.3 490.2 V504.5 H30.6" fill="none" stroke="#222" stroke-width="1.1"/><text x="23.5" y="514" font-size="10" fill="#111">x</text><circle cx="28.1" cy="490.8" r="1.8" fill="#f01010"/><path d="M40.8 510.2 L57.7 493.3 Q66 500 65.2 509.6 Z" fill="none" stroke="#222" stroke-width="1.1"/><text x="43.5" y="501.5" font-size="10" fill="#111">r</text><text x="54.5" y="507.5" font-size="10" fill="#111">a</text><circle cx="57.7" cy="493.3" r="1.8" fill="#f01010"/><line x1="9.6" y1="536.1" x2="25.5" y2="536.1" stroke="#999" stroke-width="0.7" /><line x1="9.6" y1="536.1" x2="9.6" y2="552" stroke="#999" stroke-width="0.7" /><circle cx="9.6" cy="536.1" r="2.1" fill="#f01010"/><circle cx="25.5" cy="536.1" r="1.4" fill="#111"/><circle cx="9.6" cy="552" r="1.4" fill="#111"/><text x="22" y="547" font-size="10.5" fill="#111">2</text><text x="13" y="555.5" font-size="10.5" fill="#111">1</text><line x1="44.4" y1="552" x2="60.7" y2="552" stroke="#999" stroke-width="0.7" /><line x1="60.7" y1="536.1" x2="60.7" y2="552" stroke="#999" stroke-width="0.7" /><circle cx="60.7" cy="552" r="2.1" fill="#f01010"/><circle cx="60.7" cy="536.1" r="1.4" fill="#111"/><circle cx="44.4" cy="552" r="1.4" fill="#111"/><text x="52" y="541" font-size="10.5" fill="#111">2</text><text x="42.5" y="549" font-size="10.5" fill="#111">1</text><g opacity="0.6"><path d="M9 577.6 L29.1 577.6 L29.1 596.3 L14.2 596.3 L14.2 592 L6.8 592 L6.8 580 Q6.8 577.6 9 577.6Z" fill="none" stroke="#f07a7a" stroke-width="0.8"/><circle cx="13.9" cy="584.5" r="3.6" fill="none" stroke="#f07a7a" stroke-width="0.8"/><path d="M17.4 591.6 L24.5 583.5 L24.5 591.6Z" fill="none" stroke="#f07a7a" stroke-width="0.8"/></g><circle cx="17.9" cy="586.9" r="1.9" fill="#f01010"/><path d="M14.8 629.8h7M18.3 626.3v7" stroke="#444" stroke-width="1"/><line x1="40.8" y1="629.2" x2="64.2" y2="629.2" stroke="#222" stroke-width="1.1" /><line x1="52.4" y1="617.6" x2="52.4" y2="641" stroke="#222" stroke-width="1.1" /><circle cx="52.4" cy="629.2" r="3.3" fill="none" stroke="#f01010" stroke-width="1"/><path d="M49.1 629.2h6.6M52.4 625.9000000000001v6.6" stroke="#f01010" stroke-width="0.9"/><line x1="5.7" y1="664.3" x2="29.4" y2="664.3" stroke="#222" stroke-width="1.1" /><circle cx="17.4" cy="664.3" r="3.3" fill="none" stroke="#f01010" stroke-width="1"/><path d="M14.099999999999998 664.3h6.6M17.4 661.0v6.6" stroke="#f01010" stroke-width="0.9"/><line x1="52.5" y1="652.9" x2="52.5" y2="676" stroke="#222" stroke-width="1.1" /><circle cx="52.5" cy="664.3" r="3.3" fill="none" stroke="#f01010" stroke-width="1"/><path d="M49.2 664.3h6.6M52.5 661.0v6.6" stroke="#f01010" stroke-width="0.9"/><line x1="8.5" y1="708.6" x2="27.5" y2="698.4" stroke="#222" stroke-width="1.1" /><circle cx="8.5" cy="708.6" r="3.3" fill="none" stroke="#f01010" stroke-width="1"/><path d="M5.2 708.6h6.6M8.5 705.3000000000001v6.6" stroke="#f01010" stroke-width="0.9"/><path d="M9 689.5v3M14 690.5l0.8 3M19 693l1.4 2.6M23 696l2 2M26.5 700.5l2.3 1.2M28 705.5h2.6M25.5 710.5h3.8" stroke="#888" stroke-width="1"/><circle cx="14.2" cy="737.6" r="3.3" fill="none" stroke="#f01010" stroke-width="1"/><path d="M10.899999999999999 737.6h6.6M14.2 734.3000000000001v6.6" stroke="#f01010" stroke-width="0.9"/><path d="M16.1 739.5 L16.1 751 L18.7 748.6 L21 753.5 L22.6 752.7 L20.4 748 L23.7 748 Z" fill="#fff" stroke="#333" stroke-width="0.9" stroke-linejoin="round"/><ellipse cx="46.4" cy="738.1" rx="2.6" ry="3.6" fill="none" stroke="#111" stroke-width="1.6"/><path d="M48.9 738.1H61.9" stroke="#111" stroke-width="2.2"/><path d="M57.9 738.1v4M61.0 738.1v3.5" stroke="#111" stroke-width="1.8"/><circle cx="52.5" cy="749.9" r="3.3" fill="none" stroke="#f01010" stroke-width="1"/><path d="M49.2 749.9h6.6M52.5 746.6v6.6" stroke="#f01010" stroke-width="0.9"/><ellipse cx="9.5" cy="785.9" rx="2.6" ry="3.6" fill="none" stroke="#111" stroke-width="1.6"/><path d="M12.0 785.9H25.0" stroke="#111" stroke-width="2.2"/><path d="M21.0 785.9v4M24.1 785.9v3.5" stroke="#111" stroke-width="1.8"/></svg>
<div class="a" style="left:72px;top:108px;width:1083px;height:24px;background:#d3d3d3"></div>
<div class="t" style="left:594px;top:114px;font-size:12px;color:#222">* autosnap.dxf</div>
<svg style="left:0;top:0" width="120" height="130"><circle cx="102" cy="118.7" r="5.3" fill="#f4f4f4" stroke="#2c4290" stroke-width="2.4"/><path d="M99 119h6M102 116v6" stroke="#c0c0c0" stroke-width="0.6"/><path d="M102.5 116.5 L107.5 123.5" stroke="#f0a020" stroke-width="2.2" stroke-linecap="round"/><circle cx="107.3" cy="123.8" r="1.1" fill="#e06060"/></svg>
<div class="a" style="left:72px;top:132px;width:1083px;height:23px;background:#ebebeb"></div>
<div class="a" style="left:72px;top:155px;width:23px;height:593px;background:#ebebeb"></div>
<div class="a" style="left:95px;top:155px;width:1043px;height:577px;background:#000"></div>
<div class="a" style="left:1138px;top:155px;width:17px;height:593px;background:#f8f8f8"></div>
<div class="a" style="left:95px;top:732px;width:988px;height:16px;background:#f8f8f8"></div>
<div class="a" style="left:1083px;top:732px;width:72px;height:16px;background:#ebebeb"></div>
<div class="a" style="left:1143px;top:300px;width:8px;height:283px;background:#7f7f7f;border-radius:4px"></div>
<div class="a" style="left:154px;top:737px;width:870px;height:8px;background:#7f7f7f;border-radius:4px"></div>
<div class="t" style="left:1103px;top:735px;font-size:12.8px;color:#111">10 &lt; 100</div>
<div class="a" style="left:1154px;top:108px;width:2px;height:690px;background:#c6c6c6"></div>
<svg style="left:0;top:0" width="1200" height="760" font-family="Liberation Sans"><defs><clipPath id="clipR"><rect x="95" y="130" width="1043" height="30"/></clipPath></defs><g clip-path="url(#clipR)"><rect x="98.9" y="148" width="1" height="7" fill="#555"/><text x="99.4" y="141" text-anchor="middle" font-size="9.3" fill="#222">-50</text><rect x="145.9" y="148" width="1" height="7" fill="#555"/><text x="146.4" y="141" text-anchor="middle" font-size="9.3" fill="#222">-40</text><rect x="192.9" y="148" width="1" height="7" fill="#555"/><text x="193.4" y="141" text-anchor="middle" font-size="9.3" fill="#222">-30</text><rect x="239.9" y="148" width="1" height="7" fill="#555"/><text x="240.4" y="141" text-anchor="middle" font-size="9.3" fill="#222">-20</text><rect x="286.9" y="148" width="1" height="7" fill="#555"/><text x="287.4" y="141" text-anchor="middle" font-size="9.3" fill="#222">-10</text><rect x="333.9" y="148" width="1" height="7" fill="#555"/><text x="334.4" y="141" text-anchor="middle" font-size="9.3" fill="#222">0</text><rect x="380.9" y="148" width="1" height="7" fill="#555"/><text x="381.4" y="141" text-anchor="middle" font-size="9.3" fill="#222">10</text><rect x="427.9" y="148" width="1" height="7" fill="#555"/><text x="428.4" y="141" text-anchor="middle" font-size="9.3" fill="#222">20</text><rect x="474.9" y="148" width="1" height="7" fill="#555"/><text x="475.4" y="141" text-anchor="middle" font-size="9.3" fill="#222">30</text><rect x="521.9" y="148" width="1" height="7" fill="#555"/><text x="522.4" y="141" text-anchor="middle" font-size="9.3" fill="#222">40</text><rect x="568.9" y="148" width="1" height="7" fill="#555"/><text x="569.4" y="141" text-anchor="middle" font-size="9.3" fill="#222">50</text><rect x="615.9" y="148" width="1" height="7" fill="#555"/><text x="616.4" y="141" text-anchor="middle" font-size="9.3" fill="#222">60</text><rect x="662.9" y="148" width="1" height="7" fill="#555"/><text x="663.4" y="141" text-anchor="middle" font-size="9.3" fill="#222">70</text><rect x="709.9" y="148" width="1" height="7" fill="#555"/><text x="710.4" y="141" text-anchor="middle" font-size="9.3" fill="#222">80</text><rect x="756.9" y="148" width="1" height="7" fill="#555"/><text x="757.4" y="141" text-anchor="middle" font-size="9.3" fill="#222">90</text><rect x="803.9" y="148" width="1" height="7" fill="#555"/><text x="804.4" y="141" text-anchor="middle" font-size="9.3" fill="#222">100</text><rect x="850.9" y="148" width="1" height="7" fill="#555"/><text x="851.4" y="141" text-anchor="middle" font-size="9.3" fill="#222">110</text><rect x="897.9" y="148" width="1" height="7" fill="#555"/><text x="898.4" y="141" text-anchor="middle" font-size="9.3" fill="#222">120</text><rect x="944.9" y="148" width="1" height="7" fill="#555"/><text x="945.4" y="141" text-anchor="middle" font-size="9.3" fill="#222">130</text><rect x="991.9" y="148" width="1" height="7" fill="#555"/><text x="992.4" y="141" text-anchor="middle" font-size="9.3" fill="#222">140</text><rect x="1038.9" y="148" width="1" height="7" fill="#555"/><text x="1039.4" y="141" text-anchor="middle" font-size="9.3" fill="#222">150</text><rect x="1085.9" y="148" width="1" height="7" fill="#555"/><text x="1086.4" y="141" text-anchor="middle" font-size="9.3" fill="#222">160</text><rect x="1132.9" y="148" width="1" height="7" fill="#555"/><text x="1133.4" y="141" text-anchor="middle" font-size="9.3" fill="#222">170</text></g><rect x="88" y="724.6" width="7" height="1" fill="#555"/><text transform="translate(80.8,726.0) rotate(-90)" text-anchor="middle" font-size="9.3" fill="#222">20</text><rect x="88" y="677.6" width="7" height="1" fill="#555"/><text transform="translate(80.8,679.0) rotate(-90)" text-anchor="middle" font-size="9.3" fill="#222">30</text><rect x="88" y="630.6" width="7" height="1" fill="#555"/><text transform="translate(80.8,632.0) rotate(-90)" text-anchor="middle" font-size="9.3" fill="#222">40</text><rect x="88" y="583.6" width="7" height="1" fill="#555"/><text transform="translate(80.8,585.0) rotate(-90)" text-anchor="middle" font-size="9.3" fill="#222">50</text><rect x="88" y="536.6" width="7" height="1" fill="#555"/><text transform="translate(80.8,538.0) rotate(-90)" text-anchor="middle" font-size="9.3" fill="#222">60</text><rect x="88" y="489.6" width="7" height="1" fill="#555"/><text transform="translate(80.8,491.0) rotate(-90)" text-anchor="middle" font-size="9.3" fill="#222">70</text><rect x="88" y="442.6" width="7" height="1" fill="#555"/><text transform="translate(80.8,444.0) rotate(-90)" text-anchor="middle" font-size="9.3" fill="#222">80</text><rect x="88" y="395.6" width="7" height="1" fill="#555"/><text transform="translate(80.8,397.0) rotate(-90)" text-anchor="middle" font-size="9.3" fill="#222">90</text><rect x="88" y="348.6" width="7" height="1" fill="#555"/><text transform="translate(80.8,350.0) rotate(-90)" text-anchor="middle" font-size="9.3" fill="#222">100</text><rect x="88" y="301.6" width="7" height="1" fill="#555"/><text transform="translate(80.8,303.0) rotate(-90)" text-anchor="middle" font-size="9.3" fill="#222">110</text><rect x="88" y="254.6" width="7" height="1" fill="#555"/><text transform="translate(80.8,256.0) rotate(-90)" text-anchor="middle" font-size="9.3" fill="#222">120</text><rect x="88" y="207.6" width="7" height="1" fill="#555"/><text transform="translate(80.8,209.0) rotate(-90)" text-anchor="middle" font-size="9.3" fill="#222">130</text><rect x="88" y="160.6" width="7" height="1" fill="#555"/><text transform="translate(80.8,162.0) rotate(-90)" text-anchor="middle" font-size="9.3" fill="#222">140</text><path d="M681.5 144 L692.5 144 L687 151Z" fill="#000"/><path d="M85 413.5 L85 424.5 L91.5 419Z" fill="#000"/></svg>
<div class="t" style="left:1083px;top:600px"></div>
<svg style="left:95px;top:155px" width="1043" height="577" viewBox="95 155 1043 577" font-family="Liberation Sans">
<defs><radialGradient id="glow" cx="0.5" cy="0.5" r="0.5"><stop offset="0.62" stop-color="#0c0e10" stop-opacity="0"/><stop offset="0.74" stop-color="#0e1012" stop-opacity="0.85"/><stop offset="0.84" stop-color="#1e2226" stop-opacity="0.9"/><stop offset="0.88" stop-color="#2a2e32" stop-opacity="0.9"/><stop offset="0.92" stop-color="#1c1f22" stop-opacity="0.9"/><stop offset="0.97" stop-color="#111315" stop-opacity="0.6"/><stop offset="1" stop-color="#000" stop-opacity="0"/></radialGradient></defs>
<path d="M99 725h1v1h-1zM99 678h1v1h-1zM99 631h1v1h-1zM99 584h1v1h-1zM99 537h1v1h-1zM99 490h1v1h-1zM99 443h1v1h-1zM99 396h1v1h-1zM99 349h1v1h-1zM99 302h1v1h-1zM99 255h1v1h-1zM99 208h1v1h-1zM99 161h1v1h-1zM146 725h1v1h-1zM146 678h1v1h-1zM146 631h1v1h-1zM146 584h1v1h-1zM146 537h1v1h-1zM146 490h1v1h-1zM146 443h1v1h-1zM146 396h1v1h-1zM146 349h1v1h-1zM146 302h1v1h-1zM146 255h1v1h-1zM146 208h1v1h-1zM146 161h1v1h-1zM193 725h1v1h-1zM193 678h1v1h-1zM193 631h1v1h-1zM193 584h1v1h-1zM193 537h1v1h-1zM193 490h1v1h-1zM193 443h1v1h-1zM193 396h1v1h-1zM193 349h1v1h-1zM193 302h1v1h-1zM193 255h1v1h-1zM193 208h1v1h-1zM193 161h1v1h-1zM240 725h1v1h-1zM240 678h1v1h-1zM240 631h1v1h-1zM240 584h1v1h-1zM240 537h1v1h-1zM240 490h1v1h-1zM240 443h1v1h-1zM240 396h1v1h-1zM240 349h1v1h-1zM240 302h1v1h-1zM240 255h1v1h-1zM240 208h1v1h-1zM240 161h1v1h-1zM287 725h1v1h-1zM287 678h1v1h-1zM287 631h1v1h-1zM287 584h1v1h-1zM287 537h1v1h-1zM287 490h1v1h-1zM287 443h1v1h-1zM287 396h1v1h-1zM287 349h1v1h-1zM287 302h1v1h-1zM287 255h1v1h-1zM287 208h1v1h-1zM287 161h1v1h-1zM334 725h1v1h-1zM334 678h1v1h-1zM334 631h1v1h-1zM334 584h1v1h-1zM334 537h1v1h-1zM334 490h1v1h-1zM334 443h1v1h-1zM334 396h1v1h-1zM334 349h1v1h-1zM334 302h1v1h-1zM334 255h1v1h-1zM334 208h1v1h-1zM334 161h1v1h-1zM381 725h1v1h-1zM381 678h1v1h-1zM381 631h1v1h-1zM381 584h1v1h-1zM381 537h1v1h-1zM381 490h1v1h-1zM381 443h1v1h-1zM381 396h1v1h-1zM381 349h1v1h-1zM381 302h1v1h-1zM381 255h1v1h-1zM381 208h1v1h-1zM381 161h1v1h-1zM428 725h1v1h-1zM428 678h1v1h-1zM428 631h1v1h-1zM428 584h1v1h-1zM428 537h1v1h-1zM428 490h1v1h-1zM428 443h1v1h-1zM428 396h1v1h-1zM428 349h1v1h-1zM428 302h1v1h-1zM428 255h1v1h-1zM428 208h1v1h-1zM428 161h1v1h-1zM475 725h1v1h-1zM475 678h1v1h-1zM475 631h1v1h-1zM475 584h1v1h-1zM475 537h1v1h-1zM475 490h1v1h-1zM475 443h1v1h-1zM475 396h1v1h-1zM475 349h1v1h-1zM475 302h1v1h-1zM475 255h1v1h-1zM475 208h1v1h-1zM475 161h1v1h-1zM522 725h1v1h-1zM522 678h1v1h-1zM522 631h1v1h-1zM522 584h1v1h-1zM522 537h1v1h-1zM522 490h1v1h-1zM522 443h1v1h-1zM522 396h1v1h-1zM522 349h1v1h-1zM522 302h1v1h-1zM522 255h1v1h-1zM522 208h1v1h-1zM522 161h1v1h-1zM569 725h1v1h-1zM569 678h1v1h-1zM569 631h1v1h-1zM569 584h1v1h-1zM569 537h1v1h-1zM569 490h1v1h-1zM569 443h1v1h-1zM569 396h1v1h-1zM569 349h1v1h-1zM569 302h1v1h-1zM569 255h1v1h-1zM569 208h1v1h-1zM569 161h1v1h-1zM616 725h1v1h-1zM616 678h1v1h-1zM616 631h1v1h-1zM616 584h1v1h-1zM616 537h1v1h-1zM616 490h1v1h-1zM616 443h1v1h-1zM616 396h1v1h-1zM616 349h1v1h-1zM616 302h1v1h-1zM616 255h1v1h-1zM616 208h1v1h-1zM616 161h1v1h-1zM663 725h1v1h-1zM663 678h1v1h-1zM663 631h1v1h-1zM663 584h1v1h-1zM663 537h1v1h-1zM663 490h1v1h-1zM663 443h1v1h-1zM663 396h1v1h-1zM663 349h1v1h-1zM663 302h1v1h-1zM663 255h1v1h-1zM663 208h1v1h-1zM663 161h1v1h-1zM710 725h1v1h-1zM710 678h1v1h-1zM710 631h1v1h-1zM710 584h1v1h-1zM710 537h1v1h-1zM710 490h1v1h-1zM710 443h1v1h-1zM710 396h1v1h-1zM710 349h1v1h-1zM710 302h1v1h-1zM710 255h1v1h-1zM710 208h1v1h-1zM710 161h1v1h-1zM757 725h1v1h-1zM757 678h1v1h-1zM757 631h1v1h-1zM757 584h1v1h-1zM757 537h1v1h-1zM757 490h1v1h-1zM757 443h1v1h-1zM757 396h1v1h-1zM757 349h1v1h-1zM757 302h1v1h-1zM757 255h1v1h-1zM757 208h1v1h-1zM757 161h1v1h-1zM804 725h1v1h-1zM804 678h1v1h-1zM804 631h1v1h-1zM804 584h1v1h-1zM804 537h1v1h-1zM804 490h1v1h-1zM804 443h1v1h-1zM804 396h1v1h-1zM804 349h1v1h-1zM804 302h1v1h-1zM804 255h1v1h-1zM804 208h1v1h-1zM804 161h1v1h-1zM851 725h1v1h-1zM851 678h1v1h-1zM851 631h1v1h-1zM851 584h1v1h-1zM851 537h1v1h-1zM851 490h1v1h-1zM851 443h1v1h-1zM851 396h1v1h-1zM851 349h1v1h-1zM851 302h1v1h-1zM851 255h1v1h-1zM851 208h1v1h-1zM851 161h1v1h-1zM898 725h1v1h-1zM898 678h1v1h-1zM898 631h1v1h-1zM898 584h1v1h-1zM898 537h1v1h-1zM898 490h1v1h-1zM898 443h1v1h-1zM898 396h1v1h-1zM898 349h1v1h-1zM898 302h1v1h-1zM898 255h1v1h-1zM898 208h1v1h-1zM898 161h1v1h-1zM945 725h1v1h-1zM945 678h1v1h-1zM945 631h1v1h-1zM945 584h1v1h-1zM945 537h1v1h-1zM945 490h1v1h-1zM945 443h1v1h-1zM945 396h1v1h-1zM945 349h1v1h-1zM945 302h1v1h-1zM945 255h1v1h-1zM945 208h1v1h-1zM945 161h1v1h-1zM992 725h1v1h-1zM992 678h1v1h-1zM992 631h1v1h-1zM992 584h1v1h-1zM992 537h1v1h-1zM992 490h1v1h-1zM992 443h1v1h-1zM992 396h1v1h-1zM992 349h1v1h-1zM992 302h1v1h-1zM992 255h1v1h-1zM992 208h1v1h-1zM992 161h1v1h-1zM1039 725h1v1h-1zM1039 678h1v1h-1zM1039 631h1v1h-1zM1039 584h1v1h-1zM1039 537h1v1h-1zM1039 490h1v1h-1zM1039 443h1v1h-1zM1039 396h1v1h-1zM1039 349h1v1h-1zM1039 302h1v1h-1zM1039 255h1v1h-1zM1039 208h1v1h-1zM1039 161h1v1h-1zM1086 725h1v1h-1zM1086 678h1v1h-1zM1086 631h1v1h-1zM1086 584h1v1h-1zM1086 537h1v1h-1zM1086 490h1v1h-1zM1086 443h1v1h-1zM1086 396h1v1h-1zM1086 349h1v1h-1zM1086 302h1v1h-1zM1086 255h1v1h-1zM1086 208h1v1h-1zM1086 161h1v1h-1zM1133 725h1v1h-1zM1133 678h1v1h-1zM1133 631h1v1h-1zM1133 584h1v1h-1zM1133 537h1v1h-1zM1133 490h1v1h-1zM1133 443h1v1h-1zM1133 396h1v1h-1zM1133 349h1v1h-1zM1133 302h1v1h-1zM1133 255h1v1h-1zM1133 208h1v1h-1zM1133 161h1v1h-1z" fill="#6a6a6a"/>
<circle cx="690" cy="423" r="40" fill="url(#glow)"/>
<rect x="333.9" y="155" width="1" height="577" fill="#1f1f1f"/>
<rect x="803.9" y="155" width="1" height="577" fill="#1f1f1f"/>
<rect x="95" y="348.6" width="1043" height="1" fill="#1f1f1f"/>
<line x1="686.9" y1="155" x2="686.9" y2="732" stroke="#6e5112" stroke-width="1.3" stroke-dasharray="4 2"/>
<line x1="95" y1="418.9" x2="1138" y2="418.9" stroke="#6e5112" stroke-width="1.3" stroke-dasharray="4 2"/>
<line x1="569" y1="490.5" x2="758" y2="490.5" stroke="#ff1a1a" stroke-width="1.3" stroke-dasharray="15.5 6 1.5 7.4" stroke-dashoffset="3.9"/>
<line x1="663.5" y1="396" x2="663.5" y2="585" stroke="#ff1a1a" stroke-width="1.3" stroke-dasharray="15.5 6 1.5 7.4" stroke-dashoffset="3.8"/>
<line x1="663.5" y1="396" x2="663.5" y2="439" stroke="#ff1a1a" stroke-width="1.3"/>
<path d="M428.8 334.6 A79 79 0 0 1 507.8 255.6 L725.2 255.6 A79 79 0 0 1 804.2 334.6 L804.2 476.6 L649.6 630.9 L507.8 630.9 A79 79 0 0 1 428.8 551.9 Z" fill="none" stroke="#f2f2f2" stroke-width="1.6"/>
<path d="M734.9 466.5 A75.5 75.5 0 1 0 639.4 561.4" fill="none" stroke="#c8c8c8" stroke-width="1.5"/>
<line x1="639.4" y1="561.4" x2="734.9" y2="466.5" stroke="#f0f0f0" stroke-width="1.6"/>
<line x1="739" y1="466.5" x2="800" y2="475.5" stroke="#bdbdbd" stroke-width="1.1"/>
<line x1="639.4" y1="566" x2="648.4" y2="627.2" stroke="#bdbdbd" stroke-width="1.1"/>
<line x1="475.4" y1="349.5" x2="686.9" y2="418.9" stroke="#10b4c4" stroke-width="1.2"/>
<circle cx="475.4" cy="349.5" r="5" fill="none" stroke="#b00000" stroke-width="1.1"/><path d="M469.4 349.5h12M475.4 343.5v12" stroke="#b00000" stroke-width="1"/>
<circle cx="686" cy="418" r="4" fill="none" stroke="#c89a20" stroke-width="1"/>
<rect x="674.3" y="421.3" width="31.3" height="3.4" fill="#c9c9c9"/>
<rect x="688.3" y="407" width="3.4" height="31.4" fill="#c9c9c9"/>
<circle cx="690" cy="423" r="1.6" fill="#222"/>
<text x="696" y="438" font-size="13.9" fill="#e8b820">Tangencial</text>
</svg>
<div class="a" style="left:72px;top:748px;width:1083px;height:2px;background:#c9c9c9"></div>
<div class="a" style="left:72px;top:750px;width:1082px;height:20px;background:#fff"></div>
<div class="a" style="left:72px;top:770px;width:1082px;height:1px;background:#c4c4c4"></div>
<div class="a" style="left:72px;top:771px;width:1082px;height:27px;background:#ececec"></div>
<div class="a" style="left:174px;top:776px;width:953px;height:18px;background:#fff"></div>
<div class="a" style="left:1127px;top:772px;width:26px;height:26px;border:1px solid #c2c2c2;background:linear-gradient(#f6f6f6,#e8e8e8)"></div>
<svg style="left:0;top:0" width="1200" height="844"><rect x="1133.5" y="780.5" width="13" height="9" fill="none" stroke="#333" stroke-width="1"/><rect x="1133" y="780" width="14" height="3" fill="#111"/></svg>
<div class="t" style="left:77px;top:752px;font-size:13px;color:#0c0ccc"><i>Comando:</i> line</div>
<div class="t" style="left:73px;top:779px;font-size:13.5px;color:#111">Siguiente punto:</div>
<div class="a" style="left:1156px;top:108px;width:299px;height:690px;background:#fff"></div>
<div class="a" style="left:1156px;top:108px;width:299px;height:22px;background:linear-gradient(#e9e9e9,#d8d8d8);border-bottom:1px solid #c8c8c8"></div>
<div class="t" style="left:1284px;top:113px;font-size:12px;color:#222">Lista de capas</div>
<div class="a" style="left:1156px;top:130px;width:299px;height:27px;background:linear-gradient(#f4f4f4,#e4e4e4);border-bottom:2px solid #c4c4c4"></div>
<div class="a" style="left:1214px;top:131px;width:2px;height:25px;background:#c9c9c9"></div>
<div class="a" style="left:1274px;top:131px;width:2px;height:25px;background:#c9c9c9"></div>
<div class="a" style="left:1334px;top:131px;width:2px;height:25px;background:#c9c9c9"></div>
<div class="a" style="left:1394px;top:131px;width:2px;height:25px;background:#c9c9c9"></div>
<div class="a" style="left:1156px;top:197px;width:298px;height:20px;background:#0b4ed6"></div>
<div class="a" style="left:1161px;top:163px;width:16px;height:9px;background:#fff;border:1px solid #222"></div>
<div class="t" style="left:1183px;top:161px;font-size:13.5px;color:#111">0</div>
<div class="a" style="left:1161px;top:183px;width:16px;height:9px;background:#f00;border:1px solid #222"></div>
<div class="t" style="left:1183px;top:181px;font-size:13.5px;color:#111">Centro</div>
<div class="a" style="left:1161px;top:203px;width:16px;height:9px;background:#3ff0f0;border:1px solid #222"></div>
<div class="t" style="left:1183px;top:201px;font-size:13.5px;color:#fff">Construcción</div>
<div class="a" style="left:1161px;top:223px;width:16px;height:9px;background:#000;border:1px solid #222"></div>
<div class="t" style="left:1183px;top:221px;font-size:13.5px;color:#111">Interrupción</div>
<div class="a" style="left:1161px;top:243px;width:16px;height:9px;background:#000;border:1px solid #222"></div>
<div class="t" style="left:1183px;top:241px;font-size:13.5px;color:#111">Visible</div>
<svg style="left:0;top:0" width="1500" height="300"><g transform="translate(1185,142.8) scale(1.0)"><ellipse cx="0" cy="0" rx="7.4" ry="5.4" fill="#000"/><ellipse cx="0" cy="0.6" rx="4.7" ry="3.0" fill="#fff"/><circle cx="0" cy="-0.9" r="2.8" fill="#000"/><circle cx="-0.9" cy="-1.3" r="0.7" fill="#888"/></g><g transform="translate(1245,142.8) scale(1.0)"><ellipse cx="0" cy="0" rx="7.4" ry="5.4" fill="#a8a8a8"/><ellipse cx="0" cy="0.6" rx="4.7" ry="3.0" fill="#f0f0f0"/><circle cx="0" cy="-0.9" r="2.8" fill="#a8a8a8"/><circle cx="-0.9" cy="-1.3" r="0.7" fill="#888"/></g><path d="M1305 137v12M1299 143h12" stroke="#e00000" stroke-width="2.6"/><path d="M1359 143h12" stroke="#e00000" stroke-width="2.6"/><path d="M1418 150 L1421.39 148.44 L1432.92 136.92 L1431.08 135.08 L1419.56 146.61 Z" fill="#e0a830" stroke="#8a6020" stroke-width="0.6" stroke-linejoin="round"/><path d="M1431.36 138.47 L1432.92 136.92 L1431.08 135.08 L1429.53 136.64 Z" fill="#e05050"/><g transform="translate(1423,167) scale(1.0)"><ellipse cx="0" cy="0" rx="7.4" ry="5.4" fill="#000"/><ellipse cx="0" cy="0.6" rx="4.7" ry="3.0" fill="#fff"/><circle cx="0" cy="-0.9" r="2.8" fill="#000"/><circle cx="-0.9" cy="-1.3" r="0.7" fill="#888"/></g><path d="M1441.6 167.8 V164.6 A3.5 3.5 0 0 1 1448.6 164.6 V167.8" fill="none" stroke="#b6b6b6" stroke-width="1.5"/><rect x="1440" y="167.6" width="10.2" height="6" fill="#b6b6b6"/><g transform="translate(1423,187) scale(1.0)"><ellipse cx="0" cy="0" rx="7.4" ry="5.4" fill="#000"/><ellipse cx="0" cy="0.6" rx="4.7" ry="3.0" fill="#fff"/><circle cx="0" cy="-0.9" r="2.8" fill="#000"/><circle cx="-0.9" cy="-1.3" r="0.7" fill="#888"/></g><path d="M1441.6 187.8 V184.6 A3.5 3.5 0 0 1 1448.6 184.6 V187.8" fill="none" stroke="#b6b6b6" stroke-width="1.5"/><rect x="1440" y="187.6" width="10.2" height="6" fill="#b6b6b6"/><g transform="translate(1423,207) scale(1.0)"><ellipse cx="0" cy="0" rx="7.4" ry="5.4" fill="#1b3a88"/><ellipse cx="0" cy="0.6" rx="4.7" ry="3.0" fill="#0b4ed6"/><circle cx="0" cy="-0.9" r="2.8" fill="#1b3a88"/><circle cx="-0.9" cy="-1.3" r="0.7" fill="#888"/></g><path d="M1441.6 207.8 V204.6 A3.5 3.5 0 0 1 1448.6 204.6 V207.8" fill="none" stroke="#b9c3d8" stroke-width="1.5"/><rect x="1440" y="207.6" width="10.2" height="6" fill="#b9c3d8"/><path d="M1395 213 L1398.32 211.37 L1408.35 201.35 L1406.65 199.65 L1396.63 209.68 Z" fill="#c8a870" stroke="#8a7040" stroke-width="0.6" stroke-linejoin="round"/><path d="M1406.79 202.90 L1408.35 201.35 L1406.65 199.65 L1405.10 201.21 Z" fill="#d07070"/><g transform="translate(1423,227) scale(1.0)"><ellipse cx="0" cy="0" rx="7.4" ry="5.4" fill="#000"/><ellipse cx="0" cy="0.6" rx="4.7" ry="3.0" fill="#fff"/><circle cx="0" cy="-0.9" r="2.8" fill="#000"/><circle cx="-0.9" cy="-1.3" r="0.7" fill="#888"/></g><path d="M1441.6 227.8 V224.6 A3.5 3.5 0 0 1 1448.6 224.6 V227.8" fill="none" stroke="#b6b6b6" stroke-width="1.5"/><rect x="1440" y="227.6" width="10.2" height="6" fill="#b6b6b6"/><g transform="translate(1423,247) scale(1.0)"><ellipse cx="0" cy="0" rx="7.4" ry="5.4" fill="#000"/><ellipse cx="0" cy="0.6" rx="4.7" ry="3.0" fill="#fff"/><circle cx="0" cy="-0.9" r="2.8" fill="#000"/><circle cx="-0.9" cy="-1.3" r="0.7" fill="#888"/></g><path d="M1441.6 247.8 V244.6 A3.5 3.5 0 0 1 1448.6 244.6 V247.8" fill="none" stroke="#b6b6b6" stroke-width="1.5"/><rect x="1440" y="247.6" width="10.2" height="6" fill="#b6b6b6"/><circle cx="1163.8" cy="118" r="7.2" fill="#6a6a6a"/><path d="M1160.8 115l6 6M1166.8 115l-6 6" stroke="#f4f4f4" stroke-width="1.8"/><circle cx="1181.9" cy="118" r="7.2" fill="#6a6a6a"/><rect x="1180" y="114" width="5.5" height="4.5" fill="none" stroke="#eee" stroke-width="1.1"/><rect x="1177.8" y="116.8" width="5.5" height="4.5" fill="#6a6a6a" stroke="#eee" stroke-width="1.1"/></svg>
<div class="a" style="left:1455px;top:108px;width:45px;height:690px;background:linear-gradient(90deg,#efefef,#dedede 45%,#c6c6c6 90%,#bababa 97%,#d2d2d2)"></div>
<div class="a" style="left:1454px;top:108px;width:1px;height:690px;background:#c9c9c9"></div>
<div class="act" style="left:1457px;top:121px;width:41px;height:42px;border-radius:6px"></div>
<div class="act" style="left:1457px;top:418px;width:41px;height:42px;border-radius:6px"></div>
<svg style="left:0;top:0" width="1500" height="844"><circle cx="1463" cy="117.5" r="0.9" fill="#8c8c8c"/><circle cx="1468" cy="117.5" r="0.9" fill="#8c8c8c"/><circle cx="1473" cy="117.5" r="0.9" fill="#8c8c8c"/><circle cx="1478" cy="117.5" r="0.9" fill="#8c8c8c"/><circle cx="1483" cy="117.5" r="0.9" fill="#8c8c8c"/><circle cx="1488" cy="117.5" r="0.9" fill="#8c8c8c"/><circle cx="1458" cy="264.5" r="0.6" fill="#6a6a6a"/><circle cx="1461" cy="264.5" r="0.6" fill="#6a6a6a"/><circle cx="1464" cy="264.5" r="0.6" fill="#6a6a6a"/><circle cx="1467" cy="264.5" r="0.6" fill="#6a6a6a"/><circle cx="1470" cy="264.5" r="0.6" fill="#6a6a6a"/><circle cx="1473" cy="264.5" r="0.6" fill="#6a6a6a"/><circle cx="1476" cy="264.5" r="0.6" fill="#6a6a6a"/><circle cx="1479" cy="264.5" r="0.6" fill="#6a6a6a"/><circle cx="1482" cy="264.5" r="0.6" fill="#6a6a6a"/><circle cx="1485" cy="264.5" r="0.6" fill="#6a6a6a"/><circle cx="1488" cy="264.5" r="0.6" fill="#6a6a6a"/><circle cx="1491" cy="264.5" r="0.6" fill="#6a6a6a"/><circle cx="1494" cy="264.5" r="0.6" fill="#6a6a6a"/><circle cx="1497" cy="264.5" r="0.6" fill="#6a6a6a"/><circle cx="1458" cy="410.5" r="0.6" fill="#6a6a6a"/><circle cx="1461" cy="410.5" r="0.6" fill="#6a6a6a"/><circle cx="1464" cy="410.5" r="0.6" fill="#6a6a6a"/><circle cx="1467" cy="410.5" r="0.6" fill="#6a6a6a"/><circle cx="1470" cy="410.5" r="0.6" fill="#6a6a6a"/><circle cx="1473" cy="410.5" r="0.6" fill="#6a6a6a"/><circle cx="1476" cy="410.5" r="0.6" fill="#6a6a6a"/><circle cx="1479" cy="410.5" r="0.6" fill="#6a6a6a"/><circle cx="1482" cy="410.5" r="0.6" fill="#6a6a6a"/><circle cx="1485" cy="410.5" r="0.6" fill="#6a6a6a"/><circle cx="1488" cy="410.5" r="0.6" fill="#6a6a6a"/><circle cx="1491" cy="410.5" r="0.6" fill="#6a6a6a"/><circle cx="1494" cy="410.5" r="0.6" fill="#6a6a6a"/><circle cx="1497" cy="410.5" r="0.6" fill="#6a6a6a"/></svg>
<svg style="left:0;top:0" width="1500" height="844"><rect x="1463.5" y="127.5" width="27" height="27" fill="#fff" stroke="#2a2a2a" stroke-width="1"/><rect x="1463.5" y="127" width="27.5" height="4.5" fill="#000"/><rect x="1464.5" y="128" width="3" height="3" fill="#fff"/><rect x="1463.5" y="174.5" width="27" height="27" fill="#fff" stroke="#2a2a2a" stroke-width="1"/><rect x="1463.5" y="174" width="27.5" height="4.5" fill="#000"/><rect x="1464.5" y="175" width="3" height="3" fill="#fff"/><rect x="1463.5" y="220.5" width="27" height="27" fill="#fff" stroke="#2a2a2a" stroke-width="1"/><rect x="1463.5" y="220" width="27.5" height="4.5" fill="#000"/><rect x="1464.5" y="221" width="3" height="3" fill="#fff"/><rect x="1463.5" y="276.5" width="27" height="27" fill="#fff" stroke="#2a2a2a" stroke-width="1"/><rect x="1463.5" y="276" width="27.5" height="4.5" fill="#000"/><rect x="1464.5" y="277" width="3" height="3" fill="#fff"/><rect x="1463.5" y="322.5" width="27" height="27" fill="#fff" stroke="#2a2a2a" stroke-width="1"/><rect x="1463.5" y="322" width="27.5" height="4.5" fill="#000"/><rect x="1464.5" y="323" width="3" height="3" fill="#fff"/><rect x="1463.5" y="368.5" width="27" height="27" fill="#fff" stroke="#2a2a2a" stroke-width="1"/><rect x="1463.5" y="368" width="27.5" height="4.5" fill="#000"/><rect x="1464.5" y="369" width="3" height="3" fill="#fff"/><rect x="1463.5" y="424.5" width="27" height="27" fill="#fff" stroke="#2a2a2a" stroke-width="1"/><rect x="1463.5" y="424" width="27.5" height="4.5" fill="#000"/><rect x="1464.5" y="425" width="3" height="3" fill="#fff"/><rect x="1463.5" y="471.5" width="27" height="27" fill="#fff" stroke="#2a2a2a" stroke-width="1"/><rect x="1463.5" y="471" width="27.5" height="4.5" fill="#000"/><rect x="1464.5" y="472" width="3" height="3" fill="#fff"/><path d="M1469 140 L1475 136.5 L1475 150 L1469 153.5Z" fill="#9a9a9a" stroke="#555" stroke-width="0.6"/><path d="M1472 139 L1484 135 L1484 148 L1472 152Z" fill="#f4f4f4" stroke="#666" stroke-width="0.7"/><path d="M1475.5 147.5 L1480.5 140 L1481 147Z" fill="none" stroke="#e03030" stroke-width="0.8"/><rect x="1469.5" y="184.5" width="11" height="8" fill="#f5ecc4" stroke="#8a7a50" stroke-width="0.8"/><circle cx="1479.5" cy="191" r="4.6" fill="#f5ecc4" fill-opacity="0.85" stroke="#8a7a50" stroke-width="0.8"/><rect x="1468.5" y="229.5" width="17" height="12" rx="2.5" fill="#f2f3f6" stroke="#c4cde0" stroke-width="0.8"/><rect x="1466" y="284.3" width="3.6" height="3" fill="#000"/><rect x="1473.5" y="284.3" width="14" height="3" fill="none" stroke="#222" stroke-width="0.7"/><rect x="1466" y="290.3" width="3.6" height="3" fill="#000"/><rect x="1473.5" y="290.3" width="14" height="3" fill="none" stroke="#222" stroke-width="0.7"/><rect x="1466" y="296.5" width="3.6" height="3" fill="#000"/><rect x="1473.5" y="296.5" width="14" height="3" fill="none" stroke="#222" stroke-width="0.7"/><path d="M1469.5 332 Q1477 336 1484.5 332 L1479 339 L1479 346 L1475.8 344 L1475.8 339 Z" fill="#9a9a9a" stroke="#555" stroke-width="0.6"/><ellipse cx="1477" cy="332" rx="7.5" ry="1.6" fill="#6a6a6a"/><path d="M1469.5 377 L1475 380 L1475 386 L1469.5 389Z" fill="#f0f0f0" stroke="#333" stroke-width="0.8"/><rect x="1475" y="379.5" width="10" height="7" rx="1" fill="#8a8a8a" stroke="#555" stroke-width="0.5"/><line x1="1466" y1="383" x2="1488" y2="383" stroke="#f08080" stroke-width="0.8" stroke-dasharray="1.5 1"/><path d="M1465.5 432h7M1465.5 435.5h6M1465.5 439h8M1465.5 442.5h8" stroke="#9a9a9a" stroke-width="0.7"/><line x1="1463.5" y1="446.5" x2="1490.5" y2="446.5" stroke="#333" stroke-width="0.8"/><path d="M1466 449h3M1472 449h16" stroke="#777" stroke-width="1.2"/><rect x="1470.5" y="481" width="13" height="13.5" rx="1" fill="#b47a2c"/><rect x="1472" y="482.5" width="10" height="10.5" fill="#f4f4f4"/><rect x="1474" y="479.5" width="6" height="3" rx="1" fill="#888"/><path d="M1473.5 485.5h7M1473.5 487.5h7M1473.5 489.5h6" stroke="#cfcfcf" stroke-width="0.6"/></svg>
<div class="a" style="left:0;top:798px;width:1500px;height:46px;background:#dcdcdc;border-top:1px solid #cacaca"></div>
<div class="a" style="left:253px;top:802px;width:1px;height:40px;background:#9a9a9a"></div>
<div class="t" style="left:2px;top:808px;font-size:10px;letter-spacing:0.25px;color:#111">74.9992,85.1989</div>
<div class="t" style="left:2px;top:828px;font-size:10px;letter-spacing:0.25px;color:#111">@44.9992,-14.8011</div>
<div class="t" style="left:256px;top:808px;font-size:10px;letter-spacing:0.25px;color:#111">113.5066&lt;49°</div>
<div class="t" style="left:256px;top:828px;font-size:10px;letter-spacing:0.25px;color:#111">@47.3709&lt;342°</div>
<div class="t" style="left:628px;top:818px;font-size:10px;letter-spacing:0.12px;color:#111">Siguiente punto</div>
<div class="t" style="left:754px;top:818px;font-size:10px;letter-spacing:0.12px;color:#111">Terminar</div>
<div class="t" style="left:949px;top:818px;font-size:10px;letter-spacing:0.12px;color:#111">No hay entidades seleccionadas.</div>
<svg style="left:0;top:0" width="1500" height="844"><circle cx="509.5" cy="822" r="3" fill="#c4c4c4"/><circle cx="943.5" cy="822" r="3" fill="#c4c4c4"/><circle cx="1272.5" cy="822" r="3" fill="#c4c4c4"/><rect x="717" y="806" width="18" height="30" rx="9" fill="#fff" stroke="#333" stroke-width="1"/><path d="M717 820 L735 820" stroke="#333" stroke-width="1"/><path d="M726 806 L726 820" stroke="#333" stroke-width="1"/><rect x="724" y="809" width="4" height="8" rx="2" fill="#fff" stroke="#333" stroke-width="1"/></svg>
</body></html>
